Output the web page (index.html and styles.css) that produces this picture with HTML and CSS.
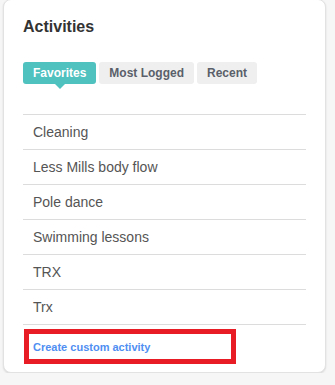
FILE: index.html
```html
<!DOCTYPE html>
<html>
<head>
<meta charset="utf-8">
<link rel="stylesheet" href="styles.css">
</head>
<body>
<div class="card">
  <h2 class="title">Activities</h2>
  <div class="tabs">
    <span class="tab active">Favorites</span>
    <span class="tab">Most Logged</span>
    <span class="tab">Recent</span>
  </div>
  <ul class="list">
    <li>Cleaning</li>
    <li>Less Mills body flow</li>
    <li>Pole dance</li>
    <li>Swimming lessons</li>
    <li>TRX</li>
    <li>Trx</li>
  </ul>
  <div class="highlight">
    <a class="create" href="#">Create custom activity</a>
  </div>
</div>
</body>
</html>
```
FILE: styles.css
```css
html, body {
  margin: 0;
  padding: 0;
  background: #f6f6f6;
  font-family: "Liberation Sans", Arial, sans-serif;
}
body {
  padding: 0 0 0 3px;
}
.card {
  box-sizing: border-box;
  width: 323px;
  height: 374px;
  margin-top: -1px;
  background: #fff;
  border: 1px solid #e2e2e2;
  border-radius: 8px;
  box-shadow: 0 1px 2px rgba(0,0,0,0.12);
  padding: 18px 19px 0 19px;
}
.title {
  margin: 0;
  font-size: 16px;
  line-height: 18px;
  font-weight: bold;
  color: #333;
}
.tabs {
  display: flex;
  gap: 3px;
  margin-top: 26px;
}
.tab {
  position: relative;
  height: 22px;
  line-height: 22px;
  padding: 0 10px;
  font-size: 12px;
  font-weight: bold;
  color: #5a5f6a;
  background: #efefef;
  border-radius: 3px;
}
.tab.active {
  background: #4fc1bf;
  color: #fff;
}
.tab.active::after {
  content: "";
  position: absolute;
  left: 50%;
  bottom: -5px;
  margin-left: -5px;
  border-left: 5px solid transparent;
  border-right: 5px solid transparent;
  border-top: 5px solid #4fc1bf;
}
.list {
  list-style: none;
  margin: 30px 0 0 0;
  padding: 0;
  border-top: 1px solid #dcdcdc;
}
.list li {
  height: 34px;
  line-height: 34px;
  padding-left: 10px;
  font-size: 14px;
  color: #555;
  border-bottom: 1px solid #dcdcdc;
}
.highlight {
  box-sizing: border-box;
  width: 212px;
  height: 35px;
  margin: 4px 0 0 1px;
  border: 5px solid #e81c24;
  padding-left: 4px;
  display: flex;
  align-items: center;
}
.create {
  font-size: 11px;
  font-weight: bold;
  color: #4f8ef2;
  text-decoration: none;
}
```
